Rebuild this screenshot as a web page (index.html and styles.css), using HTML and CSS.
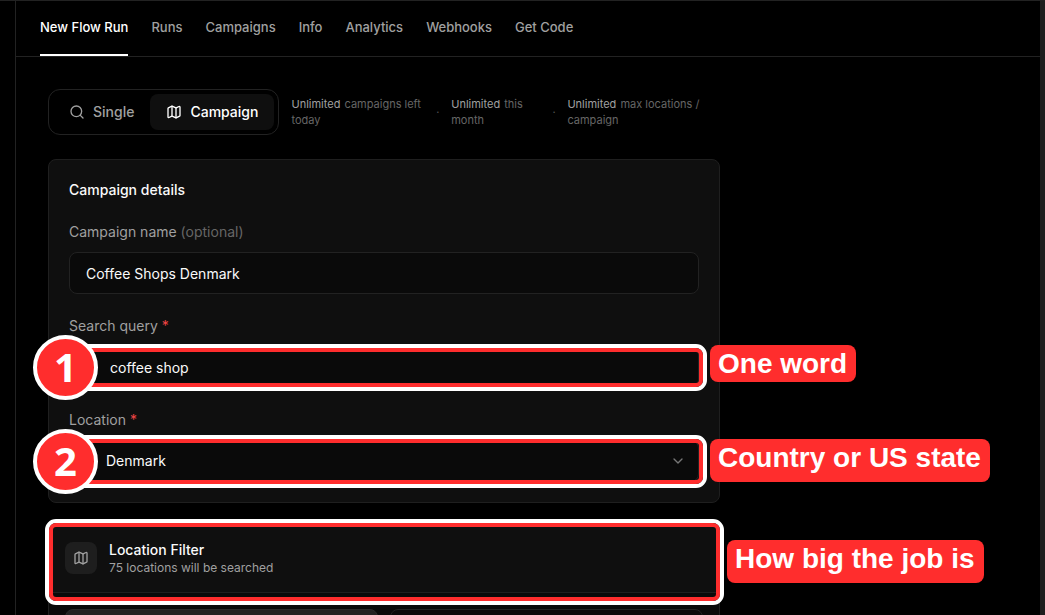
FILE: index.html
```html
<!DOCTYPE html>
<html lang="en">
<head>
<meta charset="utf-8">
<title>New Flow Run</title>
<link rel="stylesheet" href="styles.css">
</head>
<body>
<svg class="sprite" aria-hidden="true">
  <symbol id="map" viewBox="0 0 24 24"><path d="M14.106 5.553a2 2 0 0 0 1.788 0l3.659-1.83A1 1 0 0 1 21 4.619v12.764a1 1 0 0 1-.553.894l-4.553 2.277a2 2 0 0 1-1.788 0l-4.212-2.106a2 2 0 0 0-1.788 0l-3.659 1.83A1 1 0 0 1 3 19.381V6.618a1 1 0 0 1 .553-.894l4.553-2.277a2 2 0 0 1 1.788 0z"/><path d="M15 5.764v15"/><path d="M9 3.236v15"/></symbol>
  <symbol id="search" viewBox="0 0 24 24"><circle cx="11" cy="11" r="8"/><path d="m21 21-4.3-4.3"/></symbol>
  <symbol id="chevron" viewBox="0 0 24 24"><path d="m6 9 6 6 6-6"/></symbol>
</svg>
<div class="shell">
  <div class="gutter"></div>
  <div class="panel">
    <nav class="tabs">
      <a class="tab active" href="#new" aria-current="page">New Flow Run</a>
      <a class="tab" href="#runs">Runs</a>
      <a class="tab" href="#campaigns">Campaigns</a>
      <a class="tab" href="#info">Info</a>
      <a class="tab" href="#analytics">Analytics</a>
      <a class="tab" href="#webhooks">Webhooks</a>
      <a class="tab" href="#code">Get Code</a>
    </nav>
    <main class="content">
      <div class="top">
        <div class="toggle">
          <button class="mode" type="button"><svg class="icon"><use href="#search"/></svg>Single</button>
          <button class="mode selected" type="button"><svg class="icon"><use href="#map"/></svg>Campaign</button>
        </div>
        <div class="limits">
          <span><strong>Unlimited</strong> campaigns left today</span>
          <span class="dot">·</span>
          <span><strong>Unlimited</strong> this month</span>
          <span class="dot">·</span>
          <span><strong>Unlimited</strong> max locations / campaign</span>
        </div>
      </div>

      <form class="card details">
        <h2 class="title">Campaign details</h2>
        <div class="field">
          <label for="name">Campaign name <span class="optional">(optional)</span></label>
          <input class="control" id="name" type="text" value="Coffee Shops Denmark">
        </div>
        <div class="field">
          <label for="query">Search query <span class="required">*</span></label>
          <div class="slot">
            <input class="control query" id="query" type="text" value="coffee shop">
            <div class="outline outline-query"></div>
            <div class="step">1</div>
            <div class="callout callout-query">One word</div>
          </div>
        </div>
        <div class="field">
          <label for="location">Location <span class="required">*</span></label>
          <div class="slot">
            <select class="control location" id="location"><option>Denmark</option></select>
            <svg class="icon chevron"><use href="#chevron"/></svg>
            <div class="outline outline-location"></div>
            <div class="step">2</div>
            <div class="callout callout-location">Country or US state</div>
          </div>
        </div>
      </form>

      <section class="card filter">
        <header class="filter-head">
          <div class="badge"><svg class="icon"><use href="#map"/></svg></div>
          <div>
            <h2 class="title">Location Filter</h2>
            <p class="subtitle">75 locations will be searched</p>
          </div>
        </header>
        <div class="filter-body">
          <button class="choice chosen" type="button" aria-label="All locations"></button>
          <button class="choice" type="button" aria-label="Choose locations"></button>
        </div>
        <div class="outline outline-filter"></div>
        <div class="callout callout-filter">How big the job is</div>
      </section>
    </main>
  </div>
  <div class="rail"></div>
</div>
</body>
</html>
```
FILE: styles.css
```css
* { box-sizing: border-box; }

body {
  margin: 0;
  background: #000;
  color: #fafafa;
  font-family: Inter, "Liberation Sans", sans-serif;
  font-size: 14px;
  line-height: 20px;
}

.sprite { position: absolute; width: 0; height: 0; }

.icon {
  width: 16px;
  height: 16px;
  flex: none;
  fill: none;
  stroke: currentColor;
  stroke-width: 2;
  stroke-linecap: round;
  stroke-linejoin: round;
}

.shell {
  display: flex;
  height: 100vh;
  overflow: hidden;
  border-top: 1px solid #222;
}
.gutter { flex: 0 0 16px; border-right: 1px solid #222; }
.panel { flex: 1; min-width: 0; }
.rail { flex: 0 0 5px; background: #1e1e1e; }

.tabs {
  display: flex;
  gap: 23px;
  padding: 0 24px;
  border-bottom: 1px solid #222;
}
.tab {
  padding: 16px 0 17px;
  border-bottom: 2px solid transparent;
  color: #a0a0a0;
  font-size: 13px;
  font-weight: 500;
  text-decoration: none;
  white-space: nowrap;
}
.tab.active { color: #fff; border-color: #fff; }

.content { max-width: 736px; padding: 32px; }

.top { display: flex; align-items: center; gap: 12px; margin-bottom: 24px; }
.toggle {
  display: flex;
  flex: none;
  padding: 4px;
  border: 1px solid #222;
  border-radius: 12px;
}
.mode {
  display: flex;
  align-items: center;
  gap: 8px;
  padding: 8px 16px;
  border: 0;
  border-radius: 8px;
  background: none;
  color: #a0a0a0;
  font: inherit;
  font-weight: 500;
}
.mode.selected { background: #0f0f0f; color: #fff; }

.limits {
  display: grid;
  flex: 1;
  grid-template-columns: 134fr 3px 90fr 3px 154fr;
  gap: 12px;
  align-items: center;
  color: #666;
  font-size: 11px;
  line-height: 16px;
}
.limits strong { margin-right: 1px; color: #a0a0a0; font-weight: 400; }
.dot { color: #555; }

.card {
  position: relative;
  border: 1px solid #1f1f1f;
  border-radius: 8px;
  background: #0f0f0f;
}
.details {
  display: flex;
  flex-direction: column;
  gap: 22px;
  margin-bottom: 20px;
  padding: 20px;
}
.title { margin: 0; font-size: 14px; font-weight: 500; }
.field { display: flex; flex-direction: column; gap: 10px; }
.field label { color: #a0a0a0; font-weight: 400; }
.field .optional { color: #666; }
.field .required { color: #ef4444; }
.slot { position: relative; display: flex; }
.control {
  width: 100%;
  height: 42px;
  padding: 0 16px;
  border: 1px solid #222;
  border-radius: 8px;
  background: #0a0a0a;
  color: #fafafa;
  font: inherit;
  appearance: none;
}
.query { padding-left: 40px; }
.location { padding-left: 36px; }
.chevron { position: absolute; top: 13px; right: 13px; color: #777; }

.filter-head {
  display: flex;
  align-items: center;
  gap: 12px;
  padding: 16px;
  border-bottom: 1px solid #1f1f1f;
}
.badge {
  display: grid;
  place-items: center;
  width: 32px;
  height: 32px;
  border-radius: 8px;
  background: #1e1e1e;
  color: #a0a0a0;
}
.subtitle { margin: 0; color: #a0a0a0; font-size: 12px; line-height: 16px; }
.filter-body {
  display: grid;
  grid-template-columns: 1fr 1fr;
  gap: 12px;
  padding: 16px;
  border-radius: 0 0 8px 8px;
  background: #0a0a0a;
}
.choice {
  height: 42px;
  border: 1px solid #222;
  border-radius: 8px;
  background: #0a0a0a;
}
.choice.chosen { background: #222; border-color: #2a2a2a; }

/* Tutorial markers laid over the form */
.outline {
  position: absolute;
  border: 4px solid #fff;
  border-radius: 11px;
  pointer-events: none;
}
.outline::before {
  content: "";
  position: absolute;
  inset: 0;
  border: 4px solid #ff2d2d;
  border-radius: 7px;
}
.outline-query { inset: -2px -8px -3px; }
.outline-location { inset: -5px -8px -6px; }
.outline-filter { top: -5px; left: -4px; right: -5px; height: 86px; }
.step {
  position: absolute;
  top: -11px;
  left: -36px;
  width: 65px;
  height: 65px;
  border: 4px solid #fff;
  border-radius: 50%;
  background: #ff2d2d;
  color: #fff;
  font: bold 40px/55px "Noto Sans", "Open Sans", sans-serif;
  text-align: center;
}
.callout {
  position: absolute;
  padding: 3px 9px 8px 8px;
  border-radius: 8px;
  background: #ff2d2d;
  color: #fff;
  font: bold 28px/32px "Liberation Sans", Arial, sans-serif;
  white-space: nowrap;
}
.callout-query { top: -1px; left: calc(100% + 11px); padding-bottom: 2px; }
.callout-location { top: -1px; left: calc(100% + 11px); }
.callout-filter { top: 16px; left: calc(100% + 8px); }
```
